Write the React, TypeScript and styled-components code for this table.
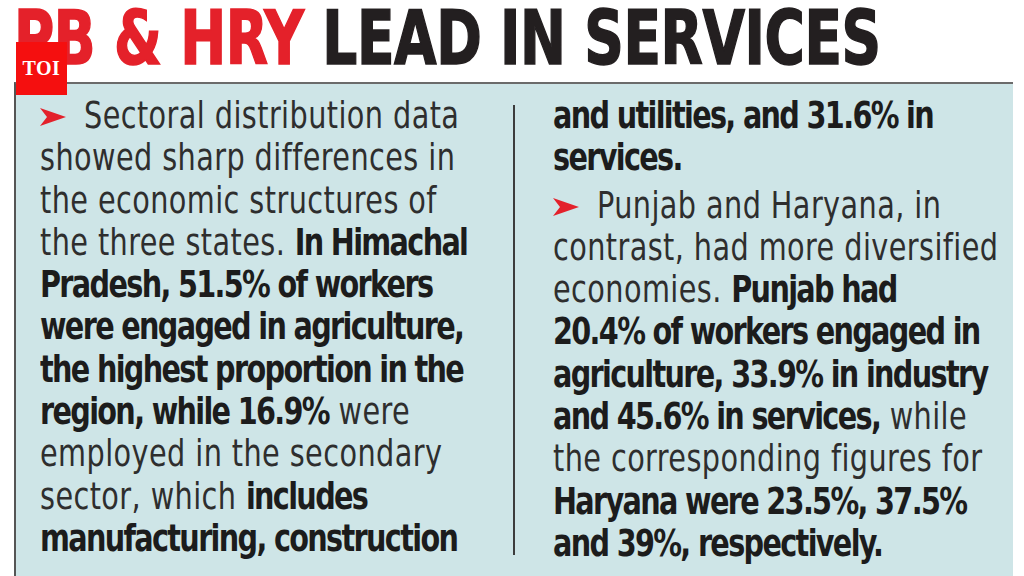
import * as React from "react";
import styled, {createGlobalStyle} from "styled-components";

const GlobalStyle = createGlobalStyle`
  html, body {
    margin: 0;
    padding: 0;
    background: #ffffff;
  }
`;

const NARROW = `"Liberation Sans Narrow", "DejaVu Sans Condensed", "Roboto Condensed", "Liberation Sans", sans-serif`;

// the print face is far narrower than any installed font, so lines get squeezed
const SQUEEZE = 0.84;

type Line = {parts: Array<[string, boolean]>; bullet?: boolean; gap?: boolean};

const left: Line[] = [
  {parts: [["Sectoral distribution data", false]], bullet: true},
  {parts: [["showed sharp differences in", false]]},
  {parts: [["the economic structures of", false]]},
  {parts: [["the three states. ", false], ["In Himachal", true]]},
  {parts: [["Pradesh, 51.5% of workers", true]]},
  {parts: [["were engaged in agriculture,", true]]},
  {parts: [["the highest proportion in the", true]]},
  {parts: [["region, while 16.9%", true], [" were", false]]},
  {parts: [["employed in the secondary", false]]},
  {parts: [["sector, which ", false], ["includes", true]]},
  {parts: [["manufacturing, construction", true]]},
];

const right: Line[] = [
  {parts: [["and utilities, and 31.6% in", true]]},
  {parts: [["services.", true]]},
  {parts: [["Punjab and Haryana, in", false]], bullet: true, gap: true},
  {parts: [["contrast, had more diversified", false]]},
  {parts: [["economies. ", false], ["Punjab had", true]]},
  {parts: [["20.4% of workers engaged in", true]]},
  {parts: [["agriculture, 33.9% in industry", true]]},
  {parts: [["and 45.6% in services,", true], [" while", false]]},
  {parts: [["the corresponding figures for", false]]},
  {parts: [["Haryana were 23.5%, 37.5%", true]]},
  {parts: [["and 39%, respectively.", true]]},
];

const Arrow = () => (
  <ArrowSvg viewBox="0 0 26 18" width={26 / SQUEEZE} height={18} preserveAspectRatio="none">
    <path d="M0 0 L26 9 L0 18 L7 9 Z" fill="#e3212b" />
  </ArrowSvg>
);

const renderLines = (lines: Line[]) =>
  lines.map((line, i) => (
    <TextLine key={i} $gap={!!line.gap}>
      {line.bullet && <Arrow />}
      {line.parts.map(([text, bold], j) =>
        bold ? <Strong key={j}>{text}</Strong> : <Plain key={j}>{text}</Plain>
      )}
    </TextLine>
  ));

export default function App() {
  return (
    <Page>
      <GlobalStyle />
      <Headline>
        <Red>PB &amp; HRY</Red> <Black>LEAD IN SERVICES</Black>
      </Headline>
      <Badge>TOI</Badge>
      <Panel>
        <LeftColumn>{renderLines(left)}</LeftColumn>
        <Divider />
        <RightColumn>{renderLines(right)}</RightColumn>
      </Panel>
    </Page>
  );
}

const Page = styled.div`
  position: relative;
  width: 1024px;
  height: 576px;
  overflow: hidden;
  background: #ffffff;
`;

const Headline = styled.h1`
  margin: 0;
  height: 82px;
  padding-left: 17px;
  box-sizing: border-box;
  font-family: ${NARROW};
  font-weight: 700;
  font-size: 74px;
  line-height: 76px;
  letter-spacing: -0.5px;
  white-space: nowrap;
  -webkit-text-stroke: 1.5px currentColor;
  transform: scaleX(0.825);
  transform-origin: left top;
`;

const Red = styled.span`
  color: #e4212a;
`;

const Black = styled.span`
  color: #231f20;
`;

const Badge = styled.div`
  position: absolute;
  left: 16px;
  top: 42px;
  width: 51px;
  height: 53px;
  background: #f50f0f;
  color: #ffffff;
  font-family: "Liberation Serif", "DejaVu Serif", serif;
  font-weight: 700;
  font-size: 20px;
  line-height: 52px;
  text-align: center;
  letter-spacing: 0.5px;
`;

const Panel = styled.div`
  display: flex;
  margin-left: 14px;
  width: 999px;
  height: 494px;
  box-sizing: border-box;
  border-top: 2px solid #6b6b6b;
  border-left: 2px solid #555555;
  background: #cee5e7;
  padding-top: 10px;
`;

const LeftColumn = styled.div`
  width: 473px;
  padding-left: 24px;
  flex-shrink: 0;
`;

const RightColumn = styled.div`
  padding-left: 38px;
`;

const Divider = styled.div`
  width: 2px;
  height: 450px;
  margin-top: 11px;
  background: #3c3c3c;
  flex-shrink: 0;
`;

const TextLine = styled.div<{$gap: boolean}>`
  height: 42.3px;
  margin-top: ${(p) => (p.$gap ? "5px" : "0")};
  font-family: ${NARROW};
  font-size: 38px;
  line-height: 42px;
  color: #2e2e2e;
  white-space: pre;
  transform: scaleX(${SQUEEZE});
  transform-origin: left center;
`;

const Plain = styled.span`
  letter-spacing: 0.5px;
`;

const Strong = styled.span`
  font-weight: 700;
  color: #1c1c1c;
  letter-spacing: -2px;
`;

const ArrowSvg = styled.svg`
  display: inline-block;
  vertical-align: 2px;
  margin-right: ${18 / SQUEEZE}px;
`;
